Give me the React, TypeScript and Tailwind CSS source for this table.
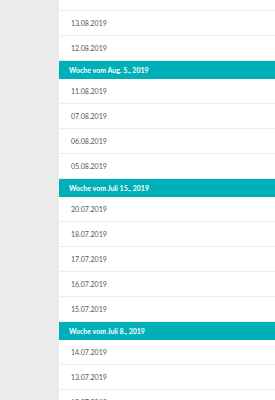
const weeks = [
  { label: null, days: ['', '13.08.2019', '12.08.2019'] },
  { label: 'Woche vom Aug. 5., 2019', days: ['11.08.2019', '07.08.2019', '06.08.2019', '05.08.2019'] },
  { label: 'Woche vom Juli 15., 2019', days: ['20.07.2019', '18.07.2019', '17.07.2019', '16.07.2019', '15.07.2019'] },
  { label: 'Woche vom Juli 8., 2019', days: ['14.07.2019', '13.07.2019', '12.07.2019'] },
]

export default function App() {
  return (
    <div className="flex h-[400px] w-[275px] overflow-hidden bg-white" style={{ fontFamily: 'Lato, "Open Sans", sans-serif' }}>
      {/* side panel */}
      <div className="w-[59px] shrink-0 bg-[#ebebeb]" />

      <div className="flex-1 flex flex-col">
        {weeks.map((w, wi) => (
          <div key={wi} className="flex flex-col">
            {w.label && (
              <div className="h-[18px] shrink-0 bg-[#00b0b8] pl-[10px] flex items-center text-[7px] font-bold text-white">
                {w.label}
              </div>
            )}
            {w.days.map((d, di) => (
              <div
                key={di}
                className={`${wi === 0 && di === 0 ? 'h-[11px]' : 'h-[25px]'} shrink-0 border-b border-[#ededed] pl-[12px] flex items-center text-[7px] text-[#555555]`}
              >
                {d}
              </div>
            ))}
          </div>
        ))}
      </div>
    </div>
  )
}
